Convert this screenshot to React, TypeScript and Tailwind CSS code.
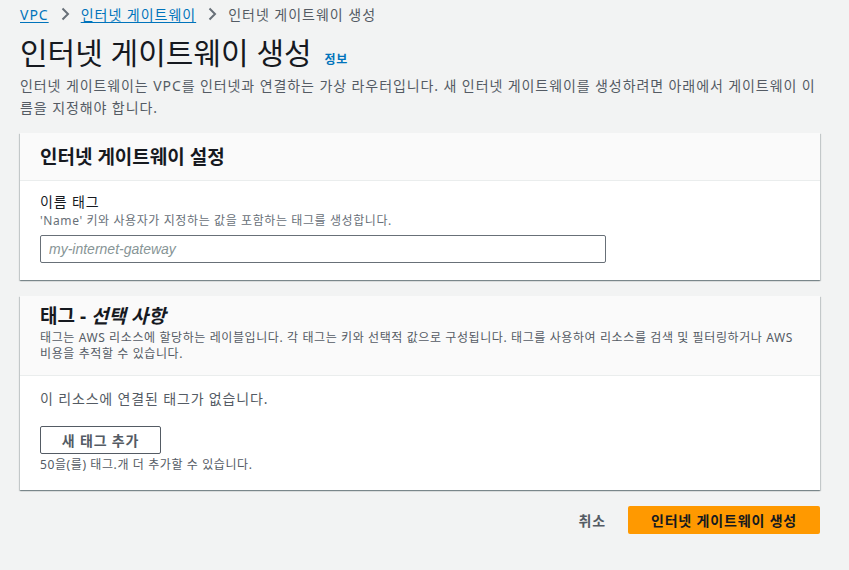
import React from 'react';

const font = "font-['Noto_Sans','Noto_Sans_CJK_KR',sans-serif]";

const Chevron = () => (
  <svg width="16" height="16" viewBox="0 0 16 16" className="mx-[8px] text-[#687078]">
    <path d="M5.5 2.5l5.5 5.5-5.5 5.5" fill="none" stroke="currentColor" strokeWidth="2" />
  </svg>
);

const Card: React.FC<{ header: React.ReactNode; children: React.ReactNode }> = ({ header, children }) => (
  <div className="bg-white shadow-[0_1px_1px_0_rgba(0,28,36,0.3),1px_1px_1px_0_rgba(0,28,36,0.15),-1px_1px_1px_0_rgba(0,28,36,0.15)]">
    <div className="bg-[#fafafa] border-b border-[#eaeded] px-5">{header}</div>
    <div className="px-5">{children}</div>
  </div>
);

export default function App() {
  return (
    <div className={`${font} min-h-[570px] bg-[#f2f3f3] px-5 text-[#16191f]`}>
      <div className="w-[800px]">
        {/* Breadcrumbs */}
        <nav className="flex items-center h-7 text-[14px] tracking-[0.07em]">
          <a href="#" className="text-[#0073bb] underline underline-offset-2">VPC</a>
          <Chevron />
          <a href="#" className="text-[#0073bb] underline underline-offset-2">인터넷 게이트웨이</a>
          <Chevron />
          <span className="text-[#545b64]">인터넷 게이트웨이 생성</span>
        </nav>

        {/* Title */}
        <div className="flex items-end mt-[5px]">
          <h1 className="text-[30px] leading-[40px] font-normal">인터넷 게이트웨이 생성</h1>
          <a href="#" className="ml-[13px] mb-[4px] text-[12px] tracking-[0.05em] font-bold text-[#0073bb]">정보</a>
        </div>
        <p className="mt-[2px] text-[14px] leading-[22px] tracking-[0.065em] text-[#545b64]">
          인터넷 게이트웨이는 VPC를 인터넷과 연결하는 가상 라우터입니다. 새 인터넷 게이트웨이를 생성하려면 아래에서 게이트웨이 이름을 지정해야 합니다.
        </p>

        <div className="mt-[14px] flex flex-col gap-4">
          <Card
            header={
              <div className="h-[47px] flex items-center">
                <h2 className="text-[19px] font-bold leading-[24px]">인터넷 게이트웨이 설정</h2>
              </div>
            }
          >
            <div className="pt-[10px] pb-[17px]">
              <div className="text-[14px] leading-[22px] tracking-[0.06em]">이름 태그</div>
              <div className="text-[12px] leading-[16px] tracking-[0.05em] text-[#687078]">
                'Name' 키와 사용자가 지정하는 값을 포함하는 태그를 생성합니다.
              </div>
              <input
                placeholder="my-internet-gateway"
                className="mt-[6px] w-[566px] h-[28px] border border-[#687078] rounded-[2px] px-2 text-[14px] italic font-['Liberation_Sans',sans-serif] placeholder:text-[#879596] outline-none"
              />
            </div>
          </Card>

          <Card
            header={
              <div className="pt-[6px] pb-[13px]">
                <h2 className="text-[19px] font-bold leading-[28px]">
                  태그 - <i>선택 사항</i>
                </h2>
                <p className="text-[12px] leading-[16px] tracking-[0.05em] text-[#545b64]">
                  태그는 AWS 리소스에 할당하는 레이블입니다. 각 태그는 키와 선택적 값으로 구성됩니다. 태그를 사용하여 리소스를 검색 및 필터링하거나 AWS
                  <br />
                  비용을 추적할 수 있습니다.
                </p>
              </div>
            }
          >
            <div className="pt-[12px] pb-[17px]">
              <div className="text-[14px] leading-[22px] tracking-[0.06em] text-[#545b64]">이 리소스에 연결된 태그가 없습니다.</div>
              <button className="mt-[16px] w-[121px] h-[28px] border border-[#545b64] rounded-[2px] bg-white text-[14px] tracking-[0.06em] font-bold text-[#545b64]">
                새 태그 추가
              </button>
              <div className="mt-[3px] text-[12px] leading-[16px] tracking-[0.05em] text-[#545b64]">
                50을(를) 태그.개 더 추가할 수 있습니다.
              </div>
            </div>
          </Card>

          <div className="flex justify-end items-center gap-[22px]">
            <button className="text-[14px] tracking-[0.06em] font-bold text-[#545b64]">취소</button>
            <button className="w-[192px] h-[28px] bg-[#ff9900] rounded-[2px] text-[14px] tracking-[0.06em] font-bold text-[#16191f]">
              인터넷 게이트웨이 생성
            </button>
          </div>
        </div>
      </div>
    </div>
  );
}
